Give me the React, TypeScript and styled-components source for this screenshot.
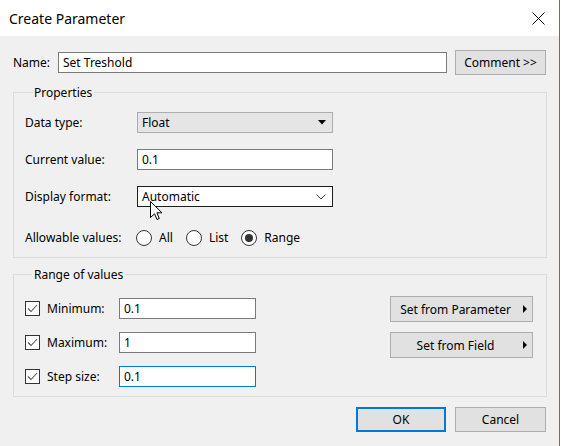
import React from 'react';
import styled, { createGlobalStyle } from 'styled-components';

const GlobalStyle = createGlobalStyle`
  html, body {
    margin: 0;
    padding: 0;
    background: #ffffff;
  }
  body {
    font-family: "Noto Sans", "Liberation Sans", sans-serif;
    font-size: 12px;
    color: #000;
  }
`;

const Window = styled.div`
  position: relative;
  width: 559px;
  height: 446px;
  border-right: 1px solid #1883d7;
  background: #f0f0f0;
  overflow: hidden;
`;

const TitleBar = styled.div`
  height: 36px;
  background: #ffffff;
  display: flex;
  align-items: center;
  justify-content: space-between;
  padding: 0 14px 0 9px;
  font-size: 14px;
`;

const Body = styled.div`
  padding: 14px 12px 0 13px;
`;

const NameRow = styled.div`
  display: flex;
  align-items: center;
  height: 25px;
`;

const NameLabel = styled.span`
  width: 45px;
`;

const TextInput = styled.div<{ $w: number; $focus?: boolean }>`
  box-sizing: border-box;
  width: ${(p) => p.$w}px;
  height: 21px;
  background: #fff;
  border: 1px solid ${(p) => (p.$focus ? '#0078d7' : '#7a7a7a')};
  padding: 0 4px;
  display: flex;
  align-items: center;
`;

const Button = styled.div<{ $w: number; $primary?: boolean }>`
  box-sizing: border-box;
  width: ${(p) => p.$w}px;
  height: 25px;
  background: #e1e1e1;
  border: ${(p) => (p.$primary ? '2px solid #0078d7' : '1px solid #adadad')};
  display: flex;
  align-items: center;
  justify-content: center;
  position: relative;
`;

const CommentButton = styled(Button)`
  margin-left: 8px;
`;

const Group = styled.fieldset<{ $top: number }>`
  margin: ${(p) => p.$top}px 0 0 0;
  padding: 0 13px 0 11px;
  border: 1px solid #dcdcdc;
  min-width: 0;
`;

const Legend = styled.legend`
  padding: 0 2px;
  margin-left: 7px;
  line-height: 17px;
  font-size: 12px;
`;

const PropGrid = styled.div`
  display: grid;
  grid-template-columns: 112px 196px;
  grid-auto-rows: 21px;
  row-gap: 16px;
  align-items: center;
  padding: 11px 0 13px 0;
`;

const Select = styled.div<{ $open?: boolean }>`
  box-sizing: border-box;
  height: 21px;
  display: flex;
  align-items: center;
  justify-content: space-between;
  padding: 0 6px 0 4px;
  background: ${(p) => (p.$open ? '#ffffff' : '#e5e5e5')};
  border: 1px solid ${(p) => (p.$open ? '#1e1e1e' : '#adadad')};
`;

const RadioLabel = styled.span`
  margin-top: 8px;
`;

const RadioRow = styled.div`
  display: flex;
  align-items: center;
  margin-top: 8px;
  margin-left: -1px;
`;

const Radio = styled.span<{ $on?: boolean }>`
  box-sizing: border-box;
  width: 16px;
  height: 16px;
  border-radius: 50%;
  border: 1px solid #333;
  background: #fff;
  display: flex;
  align-items: center;
  justify-content: center;
  margin-right: 7px;
  &::after {
    content: '';
    display: ${(p) => (p.$on ? 'block' : 'none')};
    width: 8px;
    height: 8px;
    border-radius: 50%;
    background: #333;
  }
`;

const RadioText = styled.span`
  margin-right: 13px;
`;

const RangeBody = styled.div`
  display: flex;
  justify-content: space-between;
  padding: 15px 0 9px 0;
`;

const RangeRows = styled.div`
  display: flex;
  flex-direction: column;
  gap: 13px;
`;

const RangeRow = styled.div`
  display: flex;
  align-items: center;
  height: 21px;
`;

const CheckLabel = styled.label`
  display: flex;
  align-items: center;
  width: 94px;
`;

const CheckBox = styled.span`
  box-sizing: border-box;
  width: 15px;
  height: 15px;
  border: 1px solid #333;
  background: #fff;
  margin-right: 7px;
  display: flex;
  align-items: center;
  justify-content: center;
`;

const SideButtons = styled.div`
  display: flex;
  flex-direction: column;
  gap: 10px;
  margin-top: -2px;
`;

const MenuButton = styled(Button)`
  width: 143px;
  height: 26px;
  padding-right: 12px;
`;

const MenuArrow = styled.span`
  position: absolute;
  right: 5px;
  top: 8px;
  width: 0;
  height: 0;
  border-top: 4px solid transparent;
  border-bottom: 4px solid transparent;
  border-left: 4px solid #000;
`;

const Footer = styled.div`
  display: flex;
  justify-content: flex-end;
  gap: 9px;
  margin-top: 10px;
  padding-right: 1px;
`;

const Cursor = styled.svg`
  position: absolute;
  left: 150px;
  top: 201px;
`;

const Check = () => (
  <svg width="13" height="13" viewBox="0 0 13 13">
    <path d="M2 6.5 L5 9.5 L11 3" fill="none" stroke="#555" strokeWidth="1.1" />
  </svg>
);

const rangeRows = [
  { label: 'Minimum:', value: '0.1' },
  { label: 'Maximum:', value: '1' },
  { label: 'Step size:', value: '0.1', focus: true },
];

export default function App() {
  return (
    <>
      <GlobalStyle />
      <Window>
        <TitleBar>
          <span>Create Parameter</span>
          <svg width="13" height="13" viewBox="0 0 13 13">
            <path d="M0.5 0.5 L12.5 12.5 M12.5 0.5 L0.5 12.5" stroke="#000" strokeWidth="1" />
          </svg>
        </TitleBar>
        <Body>
          <NameRow>
            <NameLabel>Name:</NameLabel>
            <TextInput $w={389}>Set Treshold</TextInput>
            <CommentButton $w={91}>Comment &gt;&gt;</CommentButton>
          </NameRow>

          <Group $top={9}>
            <Legend>Properties</Legend>
            <PropGrid>
              <span>Data type:</span>
              <Select>
                <span>Float</span>
                <svg width="8" height="5" viewBox="0 0 8 5">
                  <path d="M0 0 L8 0 L4 4.5 Z" fill="#000" />
                </svg>
              </Select>
              <span>Current value:</span>
              <TextInput $w={196}>0.1</TextInput>
              <span>Display format:</span>
              <Select $open>
                <span>Automatic</span>
                <svg width="10" height="6" viewBox="0 0 10 6">
                  <path d="M0.5 0.5 L5 5 L9.5 0.5" fill="none" stroke="#444" strokeWidth="1" />
                </svg>
              </Select>
              <RadioLabel>Allowable values:</RadioLabel>
              <RadioRow>
                <Radio />
                <RadioText>All</RadioText>
                <Radio />
                <RadioText>List</RadioText>
                <Radio $on />
                <RadioText>Range</RadioText>
              </RadioRow>
            </PropGrid>
          </Group>

          <Group $top={8}>
            <Legend>Range of values</Legend>
            <RangeBody>
              <RangeRows>
                {rangeRows.map((r) => (
                  <RangeRow key={r.label}>
                    <CheckLabel>
                      <CheckBox>
                        <Check />
                      </CheckBox>
                      {r.label}
                    </CheckLabel>
                    <TextInput $w={137} $focus={r.focus}>
                      {r.value}
                    </TextInput>
                  </RangeRow>
                ))}
              </RangeRows>
              <SideButtons>
                <MenuButton $w={143}>
                  Set from Parameter
                  <MenuArrow />
                </MenuButton>
                <MenuButton $w={143}>
                  Set from Field
                  <MenuArrow />
                </MenuButton>
              </SideButtons>
            </RangeBody>
          </Group>

          <Footer>
            <Button $w={90} $primary>
              OK
            </Button>
            <Button $w={91}>Cancel</Button>
          </Footer>
        </Body>
        <Cursor width="13" height="20" viewBox="0 0 13 20">
          <path
            d="M0.5 0.5 L0.5 16.5 L4.5 12.8 L7 18.5 L9.3 17.5 L6.9 11.8 L12 11.8 Z"
            fill="#fff"
            stroke="#000"
            strokeWidth="1"
          />
        </Cursor>
      </Window>
    </>
  );
}
